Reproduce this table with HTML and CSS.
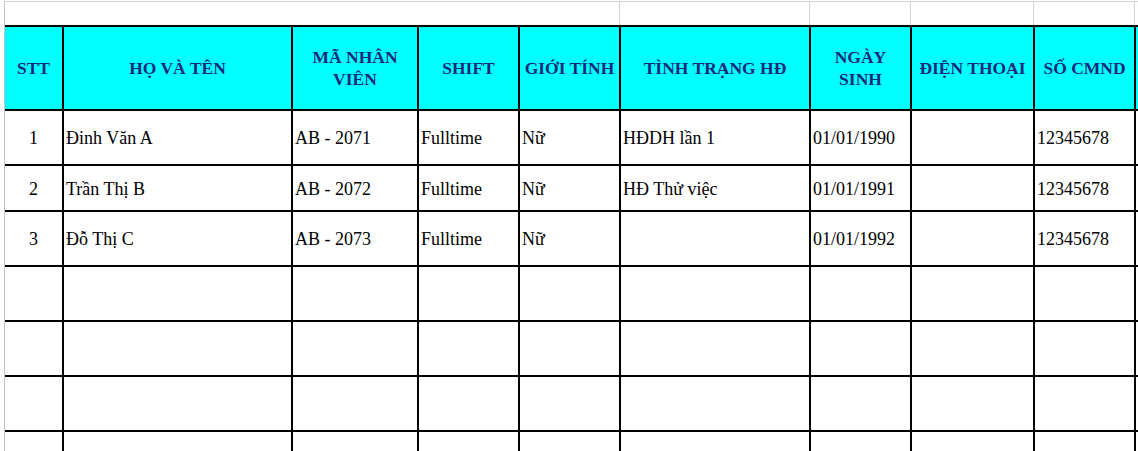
FILE: index.html
```html
<!DOCTYPE html>
<html lang="vi">
<head>
<meta charset="utf-8">
<title>Danh sách nhân viên</title>
<link rel="stylesheet" href="styles.css">
</head>
<body>
<div class="sheet">
  <div class="inner">
    <div class="toprow">
      <div class="tcell span5"></div>
      <div class="tcell"></div>
      <div class="tcell"></div>
      <div class="tcell"></div>
      <div class="tcell"></div>
      <div class="tcell"></div>
    </div>
    <div class="grid">
      <div class="hd">STT</div>
      <div class="hd">HỌ VÀ TÊN</div>
      <div class="hd">MÃ NHÂN<br>VIÊN</div>
      <div class="hd">SHIFT</div>
      <div class="hd">GIỚI TÍNH</div>
      <div class="hd">TÌNH TRẠNG HĐ</div>
      <div class="hd">NGÀY<br>SINH</div>
      <div class="hd">ĐIỆN THOẠI</div>
      <div class="hd">SỐ CMND</div>
      <div class="hd"></div>

      <div class="c ctr">1</div>
      <div class="c">Đinh Văn A</div>
      <div class="c">AB - 2071</div>
      <div class="c">Fulltime</div>
      <div class="c">Nữ</div>
      <div class="c">HĐDH lần 1</div>
      <div class="c">01/01/1990</div>
      <div class="c"></div>
      <div class="c">12345678</div>
      <div class="c"></div>

      <div class="c ctr">2</div>
      <div class="c">Trần Thị B</div>
      <div class="c">AB - 2072</div>
      <div class="c">Fulltime</div>
      <div class="c">Nữ</div>
      <div class="c">HĐ Thử việc</div>
      <div class="c">01/01/1991</div>
      <div class="c"></div>
      <div class="c">12345678</div>
      <div class="c"></div>

      <div class="c ctr">3</div>
      <div class="c">Đỗ Thị C</div>
      <div class="c">AB - 2073</div>
      <div class="c">Fulltime</div>
      <div class="c">Nữ</div>
      <div class="c"></div>
      <div class="c">01/01/1992</div>
      <div class="c"></div>
      <div class="c">12345678</div>
      <div class="c"></div>

      <div class="c"></div><div class="c"></div><div class="c"></div><div class="c"></div><div class="c"></div>
      <div class="c"></div><div class="c"></div><div class="c"></div><div class="c"></div><div class="c"></div>

      <div class="c"></div><div class="c"></div><div class="c"></div><div class="c"></div><div class="c"></div>
      <div class="c"></div><div class="c"></div><div class="c"></div><div class="c"></div><div class="c"></div>

      <div class="c"></div><div class="c"></div><div class="c"></div><div class="c"></div><div class="c"></div>
      <div class="c"></div><div class="c"></div><div class="c"></div><div class="c"></div><div class="c"></div>

      <div class="c"></div><div class="c"></div><div class="c"></div><div class="c"></div><div class="c"></div>
      <div class="c"></div><div class="c"></div><div class="c"></div><div class="c"></div><div class="c"></div>
    </div>
  </div>
</div>
</body>
</html>
```

FILE: styles.css
```css
html, body {
  margin: 0;
  padding: 0;
  background: #ffffff;
  overflow: hidden;
}

.sheet {
  width: 1138px;
  height: 451px;
  overflow: hidden;
  padding-left: 4px;
  box-sizing: border-box;
  font-family: "Liberation Serif", "Times New Roman", serif;
}

.inner {
  border-left: 1px solid #c4c4c4;
  height: 100%;
  width: 1300px;
}

.toprow {
  display: grid;
  grid-template-columns: 57px 227px 124px 99px 99px 188px 99px 121px 99px 100px;
  column-gap: 2px;
  margin-top: 1px;
  border-top: 1px solid #d4d4d4;
  height: 23px;
}

.tcell {
  box-shadow: 1px 0 0 #d4d4d4;
}

.span5 {
  grid-column: span 5;
}

.grid {
  display: grid;
  grid-template-columns: 57px 227px 124px 99px 99px 188px 99px 121px 99px 100px;
  grid-template-rows: 82px 53px 44px 53px 53px 53px 53px 53px;
  gap: 2px;
  padding-top: 2px;
  background: #000000;
}

.hd {
  background: #00ffff;
  color: #16297c;
  font-weight: bold;
  font-size: 17.5px;
  line-height: 22px;
  display: flex;
  align-items: center;
  justify-content: center;
  text-align: center;
  white-space: nowrap;
}

.c {
  background: #ffffff;
  color: #000000;
  font-size: 18px;
  display: flex;
  align-items: center;
  padding-left: 2px;
  padding-top: 2px;
  white-space: nowrap;
}

.ctr {
  justify-content: center;
  padding-left: 0;
}
```
